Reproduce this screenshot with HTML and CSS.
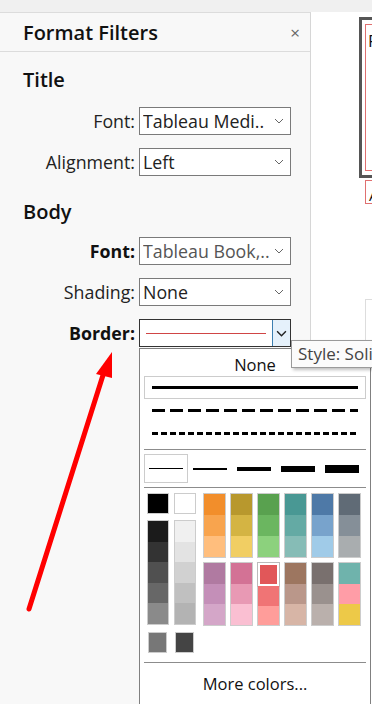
FILE: index.html
```html
<!DOCTYPE html>
<html lang="en">
<head>
  <meta charset="UTF-8" />
  <title>Format Filters</title>
  <link rel="stylesheet" href="styles.css">
</head>
<body>
  <div class="topbar"></div>
  <div class="main">
    <div class="panel">
      <div class="panel-head">
        <span class="panel-title">Format Filters</span>
        <span class="close">&times;</span>
      </div>

      <h3 class="section first">Title</h3>
      <div class="row">
        <label>Font:</label>
        <div class="select"><span>Tableau Medi..</span><svg class="chev" viewBox="0 0 10 6"><path d="M1 1 L5 5 L9 1" /></svg></div>
      </div>
      <div class="row">
        <label>Alignment:</label>
        <div class="select"><span>Left</span><svg class="chev" viewBox="0 0 10 6"><path d="M1 1 L5 5 L9 1" /></svg></div>
      </div>

      <h3 class="section">Body</h3>
      <div class="row">
        <label class="bold">Font:</label>
        <div class="select"><span class="muted">Tableau Book,..</span><svg class="chev" viewBox="0 0 10 6"><path d="M1 1 L5 5 L9 1" /></svg></div>
      </div>
      <div class="row">
        <label>Shading:</label>
        <div class="select"><span>None</span><svg class="chev" viewBox="0 0 10 6"><path d="M1 1 L5 5 L9 1" /></svg></div>
      </div>
      <div class="row">
        <label class="bold">Border:</label>
        <div class="select active">
          <span class="line-wrap"><span class="red-line"></span></span>
          <span class="drop-btn"><svg class="chev dark" viewBox="0 0 10 6"><path d="M1 1 L5 5 L9 1" /></svg></span>
        </div>
      </div>
    </div>

    <div class="canvas">
      <div class="viz-box"><div class="viz-inner"><span>F</span></div></div>
      <div class="viz-label"><span>A</span></div>
      <div class="viz-card"></div>
    </div>
  </div>

  <!-- border dropdown -->
  <div class="popup">
    <div class="none">None</div>
    <div class="style-opt selected"><span class="ln solid"></span></div>
    <div class="style-opt"><span class="ln dashed"></span></div>
    <div class="style-opt"><span class="ln dotted"></span></div>
    <div class="sep"></div>
    <div class="widths">
      <div class="w-opt selected"><span style="height:1px"></span></div>
      <div class="w-opt"><span style="height:2px"></span></div>
      <div class="w-opt"><span style="height:4px"></span></div>
      <div class="w-opt"><span style="height:6px"></span></div>
      <div class="w-opt"><span style="height:8px"></span></div>
    </div>
    <div class="sep"></div>
    <div class="palette">
      <div class="grays">
        <div class="g-col">
          <div class="sw single" style="background:#000"></div>
          <div class="stack">
            <div style="background:#1b1b1b"></div>
            <div style="background:#333333"></div>
            <div style="background:#505050"></div>
            <div style="background:#676767"></div>
            <div style="background:#8a8a8a"></div>
          </div>
          <div class="sw extra" style="background:#777777"></div>
        </div>
        <div class="g-col">
          <div class="sw single" style="background:#fff"></div>
          <div class="stack">
            <div style="background:#f0f0f0"></div>
            <div style="background:#e3e3e3"></div>
            <div style="background:#d1d1d1"></div>
            <div style="background:#c0c0c0"></div>
            <div style="background:#b3b3b3"></div>
          </div>
          <div class="sw extra" style="background:#444444"></div>
        </div>
      </div>
      <div class="colors">
        <div class="stack"><div style="background:#f28e2b"></div><div style="background:#f8a44e"></div><div style="background:#ffbe7d"></div></div>
        <div class="stack"><div style="background:#b8982d"></div><div style="background:#d4b443"></div><div style="background:#f1ce63"></div></div>
        <div class="stack"><div style="background:#59a14f"></div><div style="background:#6bb660"></div><div style="background:#8cd17d"></div></div>
        <div class="stack"><div style="background:#499894"></div><div style="background:#64aaa4"></div><div style="background:#86bcb6"></div></div>
        <div class="stack"><div style="background:#4e79a7"></div><div style="background:#78a3cc"></div><div style="background:#a0cbe8"></div></div>
        <div class="stack"><div style="background:#606b76"></div><div style="background:#858f98"></div><div style="background:#a9adaf"></div></div>
        <div class="stack"><div style="background:#b07aa1"></div><div style="background:#c48fb8"></div><div style="background:#d4a6c8"></div></div>
        <div class="stack"><div style="background:#d37295"></div><div style="background:#e899b4"></div><div style="background:#fabfd2"></div></div>
        <div class="stack"><div class="picked" style="background:#e15759"></div><div style="background:#f07475"></div><div style="background:#ff9d9a"></div></div>
        <div class="stack"><div style="background:#9d7660"></div><div style="background:#ba978a"></div><div style="background:#d7b5a6"></div></div>
        <div class="stack"><div style="background:#79706e"></div><div style="background:#9a918e"></div><div style="background:#bab0ac"></div></div>
        <div class="stack"><div style="background:#6fb3ac"></div><div style="background:#ff9da7"></div><div style="background:#edc948"></div></div>
      </div>
    </div>
    <div class="sep"></div>
    <div class="more">More colors...</div>
  </div>

  <div class="tooltip">Style: Solid</div>

  <svg class="arrow" width="372" height="704" viewBox="0 0 372 704">
    <line x1="29" y1="609" x2="104" y2="372" stroke="#f00" stroke-width="5" stroke-linecap="round" />
    <polygon points="112,352 96,374 112,378" fill="#f00" />
  </svg>
</body>
</html>
```

FILE: styles.css
```css
* {
  box-sizing: border-box;
  margin: 0;
  padding: 0;
}

body {
  width: 372px;
  height: 704px;
  overflow: hidden;
  background: #fff;
  font-family: 'Open Sans', 'Noto Sans', sans-serif;
  color: #111;
  position: relative;
}

.topbar {
  height: 12px;
  background: #f0f0f0;
}

.main {
  display: flex;
  height: 692px;
}

.panel {
  width: 311px;
  flex-shrink: 0;
  background: #f8f8f8;
  border-top: 1px solid #dcdcdc;
  border-right: 1px solid #d6d6d6;
}

.panel-head {
  height: 39px;
  display: flex;
  align-items: center;
  justify-content: space-between;
  padding: 0 10px 0 23px;
  border-bottom: 1px solid #dcdcdc;
}

.panel-title {
  font-size: 20px;
  font-weight: 600;
  color: #111;
}

.close {
  font-size: 17px;
  color: #666;
}

.section {
  font-size: 20px;
  font-weight: 600;
  line-height: 24px;
  padding-left: 23px;
  margin: 24px 0 13px;
}

.section.first {
  margin-top: 16px;
  margin-bottom: 15px;
}

.row {
  display: grid;
  grid-template-columns: 135px 152px;
  column-gap: 4px;
  align-items: center;
  margin-bottom: 13px;
}

.row label {
  text-align: right;
  font-size: 17.8px;
  color: #222;
}

.row label.bold {
  font-weight: 700;
  color: #111;
}

.select {
  height: 28px;
  background: #fff;
  border: 1px solid #7a7a7a;
  display: flex;
  align-items: center;
  justify-content: space-between;
  padding: 0 6px 0 3px;
  font-size: 17.8px;
  color: #222;
  white-space: nowrap;
  overflow: hidden;
}

.select span {
  overflow: hidden;
}

.select .muted {
  color: #555;
}

.chev {
  width: 10px;
  height: 6px;
  fill: none;
  stroke: #666;
  stroke-width: 1;
  flex-shrink: 0;
}

.chev.dark {
  width: 11px;
  height: 7px;
  stroke: #222;
  stroke-width: 1.3;
}

.select.active {
  border-color: #333;
  padding: 0 0 0 6px;
}

.line-wrap {
  flex: 1;
  height: 26px;
  padding-top: 13px;
  margin-right: 6px;
}

.red-line {
  display: block;
  height: 1px;
  background: #d04545;
}

.drop-btn {
  width: 18px;
  height: 26px;
  background: #e5f1fb;
  border-left: 1px solid #3c7fb1;
  display: flex;
  align-items: center;
  justify-content: center;
}

/* right side: piece of the dashboard */
.canvas {
  flex: 1;
  overflow: hidden;
  padding: 5px 0 0 48px;
}

.viz-box {
  width: 60px;
  height: 161px;
  border: 3px solid #555;
  border-right: none;
  padding: 4px 0 4px 3px;
}

.viz-inner {
  height: 100%;
  border: 1px solid #e07070;
  border-right: none;
  font-size: 17px;
  padding: 4px 0 0 2px;
}

.viz-label {
  width: 60px;
  height: 24px;
  margin: 2px 0 0 6px;
  border: 1px solid #e07070;
  border-right: none;
  font-size: 15px;
  padding-left: 3px;
  line-height: 28px;
}

.viz-card {
  width: 60px;
  height: 60px;
  margin: 95px 0 0 6px;
  border: 1px solid #ddd;
  border-right: none;
}

/* border dropdown */
.popup {
  position: absolute;
  left: 139px;
  top: 348px;
  width: 232px;
  height: 370px;
  background: #fff;
  border: 1px solid #808080;
  padding: 0 4px;
}

.none {
  height: 27px;
  line-height: 32px;
  text-align: center;
  font-size: 16.5px;
  color: #111;
}

.style-opt {
  height: 23px;
  display: flex;
  align-items: center;
  padding: 0 7px;
  border: 1px solid transparent;
}

.style-opt.selected {
  border-color: #ccc;
}

.ln {
  display: block;
  width: 100%;
  height: 3px;
}

.ln.solid {
  background: #000;
}

.ln.dashed {
  background: repeating-linear-gradient(90deg, #000 0 13px, transparent 13px 18px);
}

.ln.dotted {
  background: repeating-linear-gradient(90deg, #000 0 6px, transparent 6px 9px);
  width: 206px;
}

.sep {
  height: 1px;
  background: #8c8c8c;
  margin: 4px 0;
}

.widths {
  display: flex;
  height: 29px;
}

.w-opt {
  width: 44px;
  display: flex;
  align-items: center;
  padding: 0 4px;
  border: 1px solid transparent;
}

.w-opt.selected {
  border-color: #ccc;
}

.w-opt span {
  display: block;
  width: 100%;
  background: #000;
}

.palette {
  display: flex;
  padding: 1px 0 0 3px;
  height: 166px;
}

.grays {
  display: flex;
  gap: 5px;
  margin-right: 7px;
}

.g-col {
  width: 22px;
  display: flex;
  flex-direction: column;
}

.sw {
  width: 22px;
  height: 21px;
  border: 1px solid #ccc;
}

.g-col .stack {
  margin-top: 6px;
  height: 105px;
}

.sw.extra {
  width: 19px;
  margin: 7px 0 0 1px;
}

.stack {
  display: flex;
  flex-direction: column;
  border: 1px solid #ccc;
}

.stack div {
  flex: 1;
}

.colors {
  display: grid;
  grid-template-columns: repeat(6, 23px);
  grid-template-rows: 65px 64px;
  column-gap: 4px;
  row-gap: 4px;
}

.picked {
  border: 2px solid #fff;
  outline: 1px solid #bbb;
}

.more {
  text-align: center;
  font-size: 16.5px;
  line-height: 34px;
  color: #111;
}

.tooltip {
  position: absolute;
  left: 291px;
  top: 340px;
  height: 28px;
  padding: 0 6px;
  background: #fbfbfb;
  border: 1px solid #9a9a9a;
  box-shadow: 2px 2px 3px rgba(0, 0, 0, 0.25);
  font-size: 17px;
  line-height: 26px;
  color: #444;
  white-space: nowrap;
}

.arrow {
  position: absolute;
  left: 0;
  top: 0;
  pointer-events: none;
}
```
